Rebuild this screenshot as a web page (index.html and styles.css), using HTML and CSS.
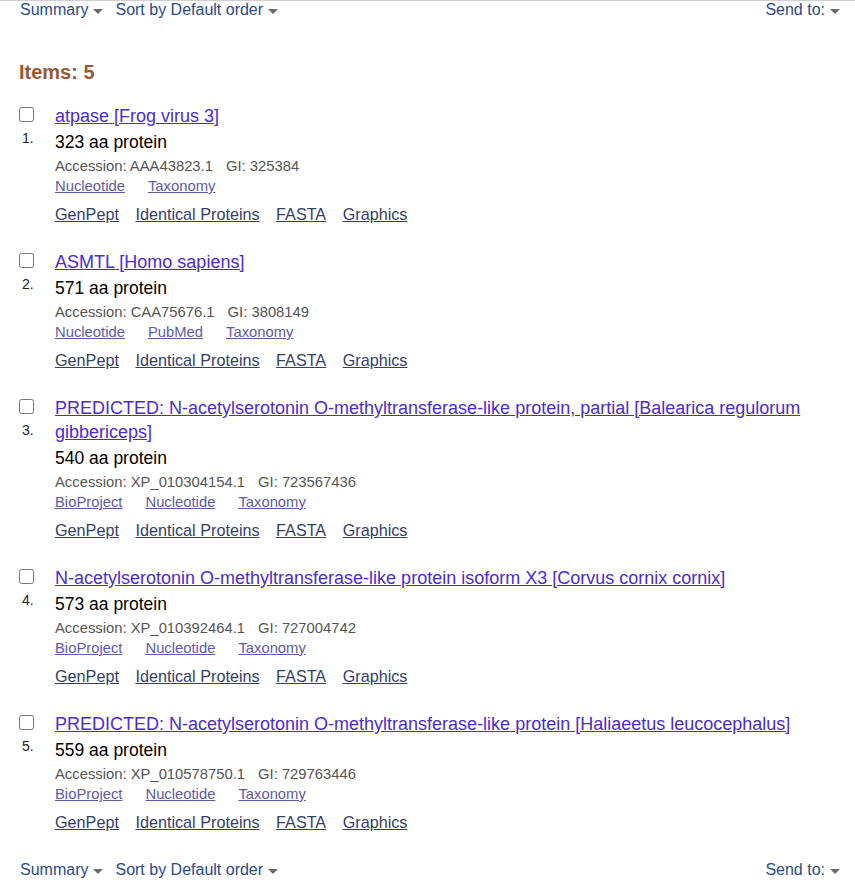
FILE: index.html
```html
<!DOCTYPE html>
<html>
<head>
<meta charset="utf-8">
<link rel="stylesheet" href="styles.css">
</head>
<body>
<div class="toolbar top">
  <div class="tb-left">
    <a class="tb-link" href="#">Summary<span class="caret"></span></a>
    <a class="tb-link" href="#">Sort by Default order<span class="caret"></span></a>
  </div>
  <a class="tb-link" href="#">Send to:<span class="caret"></span></a>
</div>

<h2 class="count">Items: 5</h2>

<div class="results">
  <div class="rprt">
    <div class="chk"><input type="checkbox"><span class="num">1.</span></div>
    <div class="body">
      <p class="title"><a href="#">atpase [Frog virus 3]</a></p>
      <p class="desc">323 aa protein</p>
      <p class="acc">Accession: AAA43823.1<span class="gi">GI: 325384</span></p>
      <p class="sub"><a href="#">Nucleotide</a><a href="#">Taxonomy</a></p>
      <p class="links"><a href="#">GenPept</a><a href="#">Identical Proteins</a><a href="#">FASTA</a><a href="#">Graphics</a></p>
    </div>
  </div>
  <div class="rprt">
    <div class="chk"><input type="checkbox"><span class="num">2.</span></div>
    <div class="body">
      <p class="title"><a href="#">ASMTL [Homo sapiens]</a></p>
      <p class="desc">571 aa protein</p>
      <p class="acc">Accession: CAA75676.1<span class="gi">GI: 3808149</span></p>
      <p class="sub"><a href="#">Nucleotide</a><a href="#">PubMed</a><a href="#">Taxonomy</a></p>
      <p class="links"><a href="#">GenPept</a><a href="#">Identical Proteins</a><a href="#">FASTA</a><a href="#">Graphics</a></p>
    </div>
  </div>
  <div class="rprt">
    <div class="chk"><input type="checkbox"><span class="num">3.</span></div>
    <div class="body">
      <p class="title"><a href="#">PREDICTED: N-acetylserotonin O-methyltransferase-like protein, partial [Balearica regulorum gibbericeps]</a></p>
      <p class="desc">540 aa protein</p>
      <p class="acc">Accession: XP_010304154.1<span class="gi">GI: 723567436</span></p>
      <p class="sub"><a href="#">BioProject</a><a href="#">Nucleotide</a><a href="#">Taxonomy</a></p>
      <p class="links"><a href="#">GenPept</a><a href="#">Identical Proteins</a><a href="#">FASTA</a><a href="#">Graphics</a></p>
    </div>
  </div>
  <div class="rprt">
    <div class="chk"><input type="checkbox"><span class="num">4.</span></div>
    <div class="body">
      <p class="title"><a href="#">N-acetylserotonin O-methyltransferase-like protein isoform X3 [Corvus cornix cornix]</a></p>
      <p class="desc">573 aa protein</p>
      <p class="acc">Accession: XP_010392464.1<span class="gi">GI: 727004742</span></p>
      <p class="sub"><a href="#">BioProject</a><a href="#">Nucleotide</a><a href="#">Taxonomy</a></p>
      <p class="links"><a href="#">GenPept</a><a href="#">Identical Proteins</a><a href="#">FASTA</a><a href="#">Graphics</a></p>
    </div>
  </div>
  <div class="rprt">
    <div class="chk"><input type="checkbox"><span class="num">5.</span></div>
    <div class="body">
      <p class="title"><a href="#">PREDICTED: N-acetylserotonin O-methyltransferase-like protein [Haliaeetus leucocephalus]</a></p>
      <p class="desc">559 aa protein</p>
      <p class="acc">Accession: XP_010578750.1<span class="gi">GI: 729763446</span></p>
      <p class="sub"><a href="#">BioProject</a><a href="#">Nucleotide</a><a href="#">Taxonomy</a></p>
      <p class="links"><a href="#">GenPept</a><a href="#">Identical Proteins</a><a href="#">FASTA</a><a href="#">Graphics</a></p>
    </div>
  </div>
</div>

<div class="toolbar bottom">
  <div class="tb-left">
    <a class="tb-link" href="#">Summary<span class="caret"></span></a>
    <a class="tb-link" href="#">Sort by Default order<span class="caret"></span></a>
  </div>
  <a class="tb-link" href="#">Send to:<span class="caret"></span></a>
</div>
</body>
</html>
```

FILE: styles.css
```css
html, body {
  margin: 0;
  padding: 0;
  background: #fff;
}
body {
  font-family: "Liberation Sans", Arial, sans-serif;
  color: #000;
}
p { margin: 0; }

.toolbar {
  display: flex;
  justify-content: space-between;
  align-items: center;
  padding: 0 15px 0 20px;
  font-size: 16px;
  line-height: 18px;
}
.toolbar.top {
  border-top: 1px solid #d0d0d0;
}
.toolbar.bottom {
  margin-top: 25px;
  line-height: 22px;
  padding-bottom: 12px;
}
.tb-left {
  display: flex;
  gap: 12px;
}
.tb-link {
  color: #2b4a8b;
  text-decoration: none;
  display: inline-flex;
  align-items: center;
}
.caret {
  display: inline-block;
  width: 0;
  height: 0;
  margin-left: 5px;
  margin-top: 2px;
  border-left: 5px solid transparent;
  border-right: 5px solid transparent;
  border-top: 5px solid #6b6b6b;
}

.count {
  margin: 41px 0 20px 19px;
  font-size: 20px;
  line-height: 24px;
  font-weight: bold;
  color: #985735;
}

.results {
  padding: 0 15px 0 19px;
}
.rprt {
  display: flex;
  margin-bottom: 24px;
}
.rprt:last-child {
  margin-bottom: 0;
}
.chk {
  width: 36px;
  flex: none;
  display: flex;
  flex-direction: column;
  align-items: flex-start;
}
.chk input {
  margin: 3px 0 0 0;
  width: 15px;
  height: 15px;
}
.num {
  margin: 8px 0 0 3px;
  font-size: 14px;
  line-height: 16px;
  color: #222;
}
.body {
  flex: 1;
  min-width: 0;
}
.title {
  font-size: 18px;
  line-height: 24px;
}
.title a {
  color: #4b2bd6;
}
.desc {
  margin-top: 2px;
  font-size: 17.5px;
  line-height: 24px;
}
.acc {
  font-size: 14.8px;
  line-height: 24px;
  color: #555;
}
.gi {
  margin-left: 13px;
}
.sub {
  display: flex;
  gap: 23px;
  font-size: 14.8px;
  line-height: 16px;
}
.sub a {
  color: #5d5ba6;
}
.links {
  display: flex;
  gap: 16.5px;
  margin-top: 8px;
  font-size: 16.2px;
  line-height: 24px;
}
.links a {
  color: #34406a;
}
```
